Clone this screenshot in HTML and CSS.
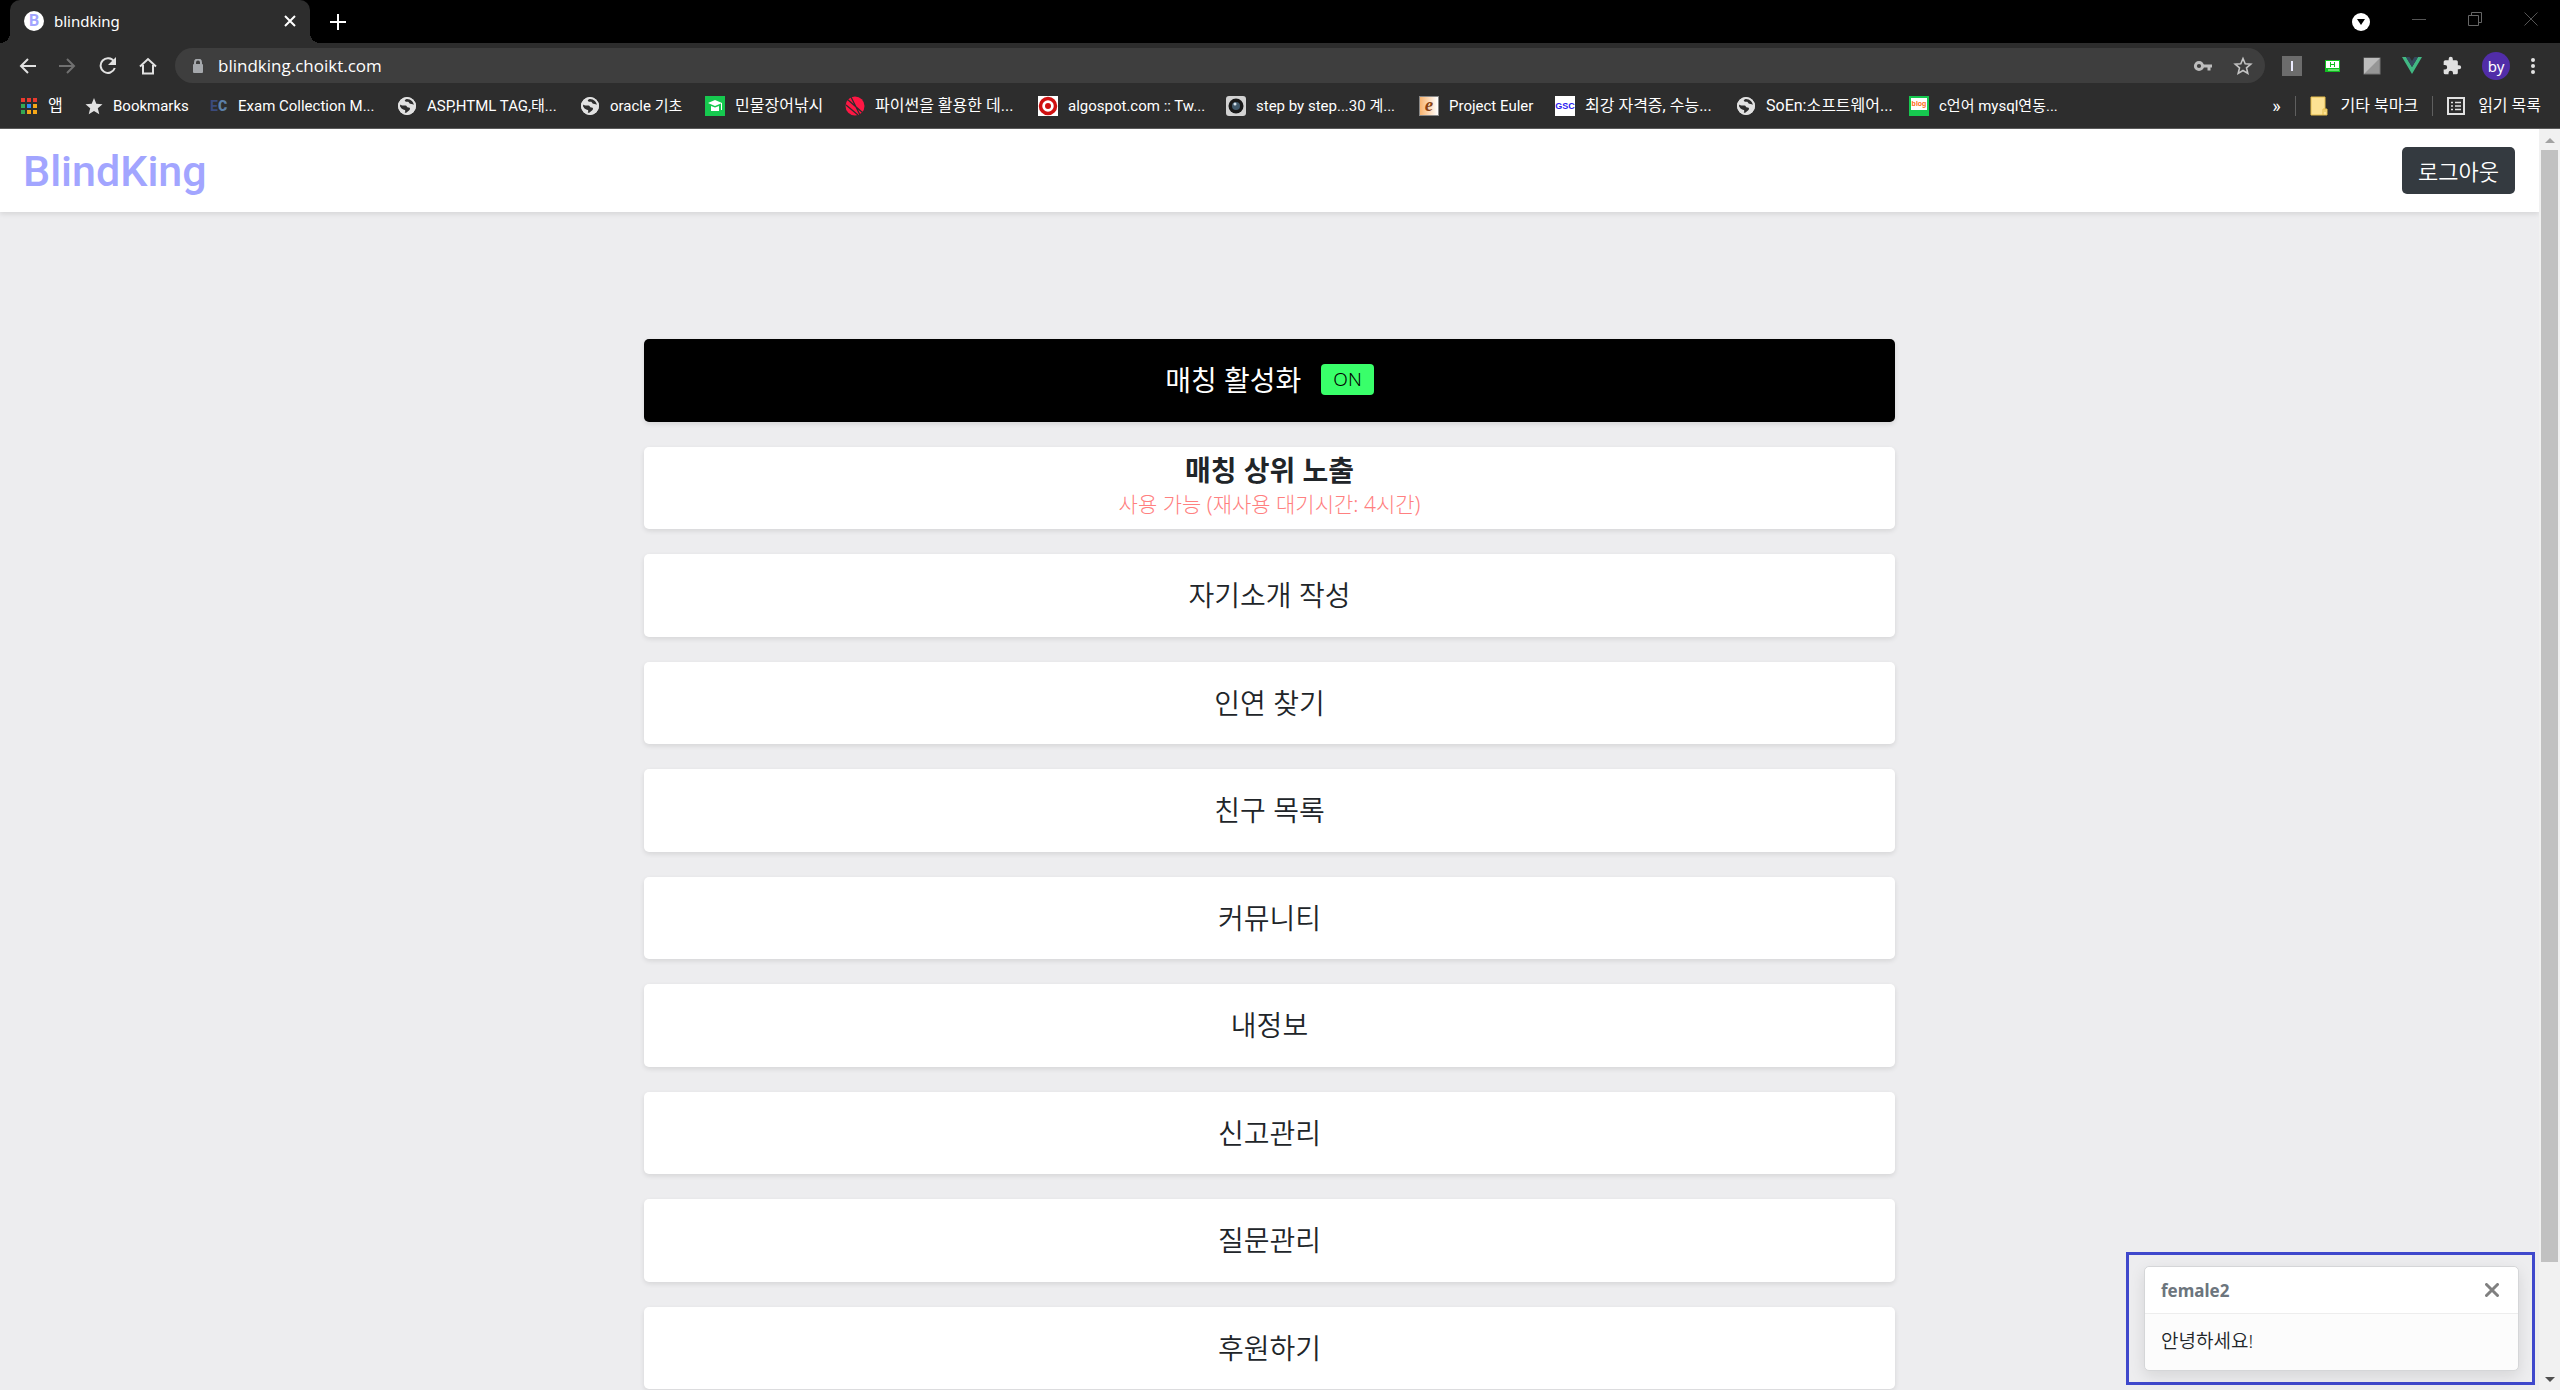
FILE: index.html
```html
<!DOCTYPE html>
<html lang="ko">
<head>
    <meta charset="UTF-8">
    <meta name="viewport" content="width=device-width, initial-scale=1.0">
    <title>blindking</title>
    <link rel="stylesheet" href="styles.css">
</head>
<body>
    <!-- globe icon, used by several bookmarks -->
    <svg class="defs" width="0" height="0">
        <symbol id="globe" viewBox="0 0 20 20">
            <circle cx="10" cy="10" r="9" fill="#e1e1e1"/>
            <path d="M2.500 8c2 2 4 1.500 6 1.500 1.500 0 1 2 3 2s2 2 .5 3-2 2-4 3c-1-1 1-2 0-3.500-3-.5-5.500-3-5.500-6zM10 2.500c-2 1-3 2-1.500 3s2-.5 3 .5 1 2 3 2 1.500 1 3 1c.5-3-2-6-4.500-6.500z" fill="#2d2d2d"/>
            <circle cx="10" cy="10" r="8" fill="none" stroke="#e1e1e1" stroke-width="2"/>
        </symbol>
    </svg>

    <div class="browser">
        <div class="tab-strip">
            <div class="tab">
                <span class="favicon">B</span>
                <span class="tab-title">blindking</span>
                <button class="icon-btn" aria-label="탭 닫기">
                    <svg width="12" height="12" viewBox="0 0 12 12"><path d="M1 1l10 10M11 1L1 11" stroke="#fff" stroke-width="2"/></svg>
                </button>
            </div>
            <button class="icon-btn" aria-label="새 탭">
                <svg width="16" height="16" viewBox="0 0 16 16"><path d="M8 0v16M0 8h16" stroke="#fff" stroke-width="2"/></svg>
            </button>
            <div class="window-controls">
                <button class="icon-btn" aria-label="탭 검색">
                    <svg width="18" height="18" viewBox="0 0 18 18"><circle cx="9" cy="9" r="9" fill="#fff"/><path d="M5 6h8l-4 6z" fill="#000"/></svg>
                </button>
                <button class="icon-btn system" aria-label="최소화">
                    <svg width="14" height="14" viewBox="0 0 14 14"><path d="M0 7.500h14" stroke="#555"/></svg>
                </button>
                <button class="icon-btn system" aria-label="이전 크기로">
                    <svg width="14" height="14" viewBox="0 0 14 14"><path d="M.5 3.500h10v10h-10zM3.500 3V.5h10v10H11" fill="none" stroke="#666"/></svg>
                </button>
                <button class="icon-btn system" aria-label="닫기">
                    <svg width="14" height="14" viewBox="0 0 14 14"><path d="M.5.5l13 13M13.500.5l-13 13" stroke="#555"/></svg>
                </button>
            </div>
        </div>

        <div class="toolbar">
            <button class="icon-btn" aria-label="뒤로">
                <svg width="18" height="16" viewBox="0 0 18 16"><path d="M17 8H2M9 1L2 8l7 7" fill="none" stroke="#e1e1e1" stroke-width="2"/></svg>
            </button>
            <button class="icon-btn" aria-label="앞으로">
                <svg width="18" height="16" viewBox="0 0 18 16"><path d="M0 8h15M8 1l7 7-7 7" fill="none" stroke="#707070" stroke-width="2"/></svg>
            </button>
            <button class="icon-btn" aria-label="새로고침">
                <svg width="18" height="18" viewBox="0 0 18 18"><path d="M15 4.500A7.300 7.300 0 1 0 15.800 11" fill="none" stroke="#e1e1e1" stroke-width="2"/><path d="M17 0v8H9z" fill="#e1e1e1"/></svg>
            </button>
            <button class="icon-btn" aria-label="홈">
                <svg width="18" height="18" viewBox="0 0 18 18"><path d="M1 9.500L9 2l8 7.500M4 8v8.500h10V8" fill="none" stroke="#e1e1e1" stroke-width="2"/></svg>
            </button>
            <div class="address-bar">
                <svg width="12" height="14" viewBox="0 0 12 14"><path d="M3 6V3.500a3 3 0 0 1 6 0V6" fill="none" stroke="#a5a8ac" stroke-width="2"/><rect x="1" y="5" width="10" height="9" rx="1" fill="#a5a8ac"/></svg>
                <input class="address" type="text" value="blindking.choikt.com" aria-label="주소창">
                <button class="icon-btn" aria-label="비밀번호">
                    <svg width="20" height="12" viewBox="0 0 20 12"><circle cx="6" cy="6" r="3.600" fill="none" stroke="#bdbdbd" stroke-width="3"/><path d="M9 4.500h10v3h-1.500V10.500h-3v-3H9z" fill="#bdbdbd"/></svg>
                </button>
                <button class="icon-btn" aria-label="북마크에 추가">
                    <svg width="20" height="20" viewBox="0 0 20 20"><path d="M10 2.500l2.200 5.200 5.600.5-4.300 3.700 1.300 5.500L10 14.500l-4.800 2.900 1.300-5.500-4.300-3.700 5.600-.5z" fill="none" stroke="#c4c4c4" stroke-width="1.600"/></svg>
                </button>
            </div>
            <div class="extensions">
                <button class="icon-btn" aria-label="확장 I">
                    <svg width="20" height="20" viewBox="0 0 20 20"><rect width="20" height="20" fill="#6c6c6c"/><path d="M10 5v10" stroke="#ececff" stroke-width="2"/></svg>
                </button>
                <button class="icon-btn" aria-label="확장 H">
                    <svg width="20" height="20" viewBox="0 0 20 20"><rect x="3" y="4" width="15" height="12" fill="#10c020"/><rect x="4" y="5" width="13" height="7" fill="#fff"/><path d="M8.500 6v5M12.500 6v5M8 8.500h5" stroke="#10c020"/><path d="M6 14h11" stroke="#b8ffb8"/></svg>
                </button>
                <button class="icon-btn" aria-label="확장">
                    <svg width="20" height="20" viewBox="0 0 20 20"><rect x="2" y="2" width="16" height="16" fill="#969696" stroke="#777"/><path d="M2 2h16L2 18z" fill="#bcbcbc"/></svg>
                </button>
                <button class="icon-btn" aria-label="Vue">
                    <svg width="20" height="20" viewBox="0 0 20 20"><path d="M0 1h4l6 10 6-10h4L10 18z" fill="#41b883"/><path d="M4 1h3.500L10 5l2.500-4H16l-6 10z" fill="#35495e"/></svg>
                </button>
                <button class="icon-btn" aria-label="확장 프로그램">
                    <svg width="20" height="20" viewBox="0 0 24 24"><path d="M20.500 11H19V7a2 2 0 0 0-2-2h-4V3.500a2.500 2.500 0 0 0-5 0V5H4a2 2 0 0 0-2 2v3.800h1.500a2.700 2.700 0 0 1 0 5.400H2V20a2 2 0 0 0 2 2h3.800v-1.500a2.700 2.700 0 0 1 5.400 0V22H17a2 2 0 0 0 2-2v-4h1.500a2.500 2.500 0 0 0 0-5z" fill="#e1e1e1"/></svg>
                </button>
                <button class="profile">by</button>
                <button class="icon-btn" aria-label="메뉴">
                    <svg width="6" height="18" viewBox="0 0 6 18"><circle cx="3" cy="3" r="2" fill="#e1e1e1"/><circle cx="3" cy="9" r="2" fill="#e1e1e1"/><circle cx="3" cy="15" r="2" fill="#e1e1e1"/></svg>
                </button>
            </div>
        </div>

        <div class="bookmark-bar">
            <nav class="bookmarks">
                <a class="ko" href="#">
                    <svg width="18" height="18" viewBox="0 0 18 18"><path d="M1 1h4v4H1zM7 1h4v4H7zM13 1h4v4h-4z" fill="#ea3a2e"/><path d="M1 7h4v4H1zM1 13h4v4H1z" fill="#34a853"/><path d="M7 7h4v4H7z" fill="#2f8af5"/><path d="M13 7h4v4h-4zM7 13h4v4H7zM13 13h4v4h-4z" fill="#f5a718"/></svg>
                    앱
                </a>
                <a href="#">
                    <svg width="18" height="18" viewBox="0 0 18 18"><path d="M9 1l2.300 5.700 6.200.5-4.700 4 1.500 6L9 14l-5.300 3.200 1.500-6-4.700-4 6.200-.5z" fill="#e1e1e1"/></svg>
                    Bookmarks
                </a>
                <a href="#"><span class="ec">E<b>C</b></span>Exam Collection M...</a>
                <a href="#"><svg width="20" height="20"><use href="#globe"/></svg>ASP,HTML TAG,태...</a>
                <a href="#"><svg width="20" height="20"><use href="#globe"/></svg>oracle 기초</a>
                <a class="ko" href="#">
                    <svg width="20" height="20" viewBox="0 0 20 20"><rect width="20" height="20" fill="#16c94f"/><path d="M3 7l7-3 7 3-7 3z" fill="#fff"/><path d="M6 10l4 1.500 4-1.500v5H6zM16 7h1v7h-1z" fill="#fff"/></svg>
                    민물장어낚시
                </a>
                <a class="ko" href="#">
                    <svg width="20" height="20" viewBox="0 0 20 20"><circle cx="10" cy="10" r="9.500" fill="#ff1744"/><path d="M2 3l16 14M6 1l9 18M1 9l12 10" stroke="#2d2d2d" stroke-width="1.300"/></svg>
                    파이썬을 활용한 데...
                </a>
                <a href="#">
                    <svg width="20" height="20" viewBox="0 0 20 20"><rect width="20" height="20" fill="#fff"/><circle cx="10" cy="10" r="7.500" fill="none" stroke="#cf1010" stroke-width="3.500"/><circle cx="10" cy="10" r="3" fill="#cf1010"/></svg>
                    algospot.com :: Tw...
                </a>
                <a href="#">
                    <svg width="20" height="20" viewBox="0 0 20 20"><rect width="20" height="20" rx="3" fill="#d2d2d2"/><circle cx="10" cy="10" r="7.500" fill="#191919"/><circle cx="10" cy="10" r="4" fill="#41596b"/><circle cx="9" cy="8" r="1.500" fill="#d8e4ee"/></svg>
                    step by step...30 계...
                </a>
                <a href="#"><span class="euler">e</span>Project Euler</a>
                <a class="ko" href="#"><span class="gsc">GSC</span>최강 자격증, 수능...</a>
                <a class="ko" href="#"><svg width="20" height="20"><use href="#globe"/></svg>SoEn:소프트웨어...</a>
                <a href="#"><span class="blog">blog</span>c언어 mysql연동...</a>
            </nav>
            <div class="bookmark-side">
                <button class="icon-btn more" aria-label="북마크 더보기">»</button>
                <a class="side-link ko" href="#">
                    <svg width="18" height="20" viewBox="0 0 18 20"><path d="M1 1h14v12h2v6H1z" fill="#fde293" stroke="#e5bd4c"/><path d="M13 19v-6h2v3" fill="none" stroke="#e5bd4c"/></svg>
                    기타 북마크
                </a>
                <a class="side-link ko" href="#">
                    <svg width="18" height="18" viewBox="0 0 18 18"><path d="M1 1h16v16H1z" fill="none" stroke="#e1e1e1" stroke-width="2"/><path d="M4 5.500h2M4 9h2M4 12.500h2M8 5.500h6M8 9h6M8 12.500h6" stroke="#e1e1e1" stroke-width="1.500"/></svg>
                    읽기 목록
                </a>
            </div>
        </div>
    </div>

    <div class="viewport">
        <div class="page">
            <header class="header">
                <a class="logo" href="#">BlindKing</a>
                <button class="logout">로그아웃</button>
            </header>

            <main class="menu">
                <button class="menu-btn active">매칭 활성화 <span class="badge">ON</span></button>
                <button class="menu-btn two-line">
                    <strong>매칭 상위 노출</strong>
                    <span class="hint">사용 가능 (재사용 대기시간: 4시간)</span>
                </button>
                <button class="menu-btn">자기소개 작성</button>
                <button class="menu-btn">인연 찾기</button>
                <button class="menu-btn">친구 목록</button>
                <button class="menu-btn">커뮤니티</button>
                <button class="menu-btn">내정보</button>
                <button class="menu-btn">신고관리</button>
                <button class="menu-btn">질문관리</button>
                <button class="menu-btn">후원하기</button>
            </main>
        </div>

        <div class="scrollbar">
            <svg width="10" height="5" viewBox="0 0 10 5"><path d="M0 5l5-5 5 5z" fill="#a3a3a3"/></svg>
            <div class="track"><div class="thumb"></div></div>
            <svg width="10" height="5" viewBox="0 0 10 5"><path d="M0 0l5 5 5-5z" fill="#505050"/></svg>
        </div>

        <!-- new message notification -->
        <div class="toast-area">
            <div class="toast">
                <div class="toast-header">
                    <strong>female2</strong>
                    <button class="icon-btn" aria-label="알림 닫기">
                        <svg width="14" height="14" viewBox="0 0 14 14"><path d="M1.500 1.500l11 11M12.500 1.500l-11 11" stroke="#808080" stroke-width="3" stroke-linecap="round"/></svg>
                    </button>
                </div>
                <div class="toast-body">안녕하세요!</div>
            </div>
        </div>
    </div>
</body>
</html>
```
FILE: styles.css
```css
* {
    box-sizing: border-box;
}

body {
    margin: 0;
    height: 100vh;
    display: flex;
    flex-direction: column;
    overflow: hidden;
    font-family: "Noto Sans", "Noto Sans CJK KR", sans-serif;
    background-color: #ededef;
    color: #212529;
}

button,
input {
    font-family: inherit;
    border: none;
    padding: 0;
    background: none;
    color: inherit;
}

button {
    cursor: pointer;
}

a {
    color: inherit;
    text-decoration: none;
}

svg {
    display: block;
    flex: none;
}

.defs {
    position: absolute;
}

.icon-btn {
    display: flex;
    align-items: center;
    justify-content: center;
}

/* browser window */
.browser {
    flex: none;
    background-color: #2d2d2d;
    color: #fff;
    font-size: 15px;
    border-bottom: 1px solid #5a5a5a;
}

.tab-strip {
    display: flex;
    align-items: center;
    gap: 20px;
    height: 43px;
    padding-left: 10px;
    background-color: #000;
}

.tab {
    position: relative;
    display: flex;
    align-items: center;
    gap: 10px;
    width: 300px;
    height: 43px;
    padding: 0 14px 2px;
    background-color: #2d2d2d;
    border-radius: 10px 10px 0 0;
}

.tab::before,
.tab::after {
    content: "";
    position: absolute;
    bottom: 0;
    width: 10px;
    height: 10px;
}

.tab::before {
    right: 100%;
    background: radial-gradient(circle at 0 0, #000 10px, #2d2d2d 10px);
}

.tab::after {
    left: 100%;
    background: radial-gradient(circle at 100% 0, #000 10px, #2d2d2d 10px);
}

.favicon {
    width: 20px;
    height: 20px;
    border-radius: 50%;
    background-color: #fff;
    color: #a2a5ff;
    font: bold 16px/20px Roboto, sans-serif;
    text-align: center;
}

.tab-title {
    flex: 1;
}

.window-controls {
    display: flex;
    align-items: center;
    gap: 42px;
    margin-left: auto;
    padding: 0 22px 0 0;
}

.system {
    padding-bottom: 6px;
}

.toolbar {
    display: flex;
    align-items: center;
    gap: 22px;
    height: 45px;
    padding: 0 24px 0 19px;
}

.address-bar {
    flex: 1;
    display: flex;
    align-items: center;
    gap: 20px;
    height: 35px;
    margin-left: -4px;
    padding: 0 12px 0 17px;
    border-radius: 18px;
    background-color: #3e3e3e;
}

.address {
    flex: 1;
    height: 35px;
    margin-left: -6px;
    font-family: "Open Sans", sans-serif;
    font-size: 17px;
    outline: none;
}

.extensions {
    display: flex;
    align-items: center;
    gap: 20px;
    margin-left: -5px;
}

.profile {
    width: 28px;
    height: 28px;
    border-radius: 50%;
    background-color: #512da8;
    font-size: 15px;
    line-height: 26px;
}

.bookmark-bar {
    display: flex;
    align-items: center;
    height: 40px;
    padding: 0 19px 4px 20px;
    font-family: Roboto, "Noto Sans CJK KR", sans-serif;
    line-height: 24px;
}

.bookmarks {
    display: grid;
    grid-template-columns: 65px 125px 187px 183px 125px 140px 193px 188px 193px 136px 181px 173px auto;
    white-space: nowrap;
}

.bookmarks a,
.side-link {
    display: flex;
    align-items: center;
    gap: 10px;
}

.bookmark-side {
    display: flex;
    align-items: center;
    gap: 14px;
    margin-left: auto;
    white-space: nowrap;
}

.bookmark-side .side-link {
    height: 20px;
    padding-left: 14px;
    gap: 13px;
    border-left: 1px solid #5f5f5f;
}

.ko {
    font-size: 16px;
}

.more {
    font-size: 18px;
    line-height: 20px;
}

.ec {
    width: 18px;
    color: #3b4a7c;
    font-size: 14px;
    font-weight: bold;
}

.ec b {
    color: #5c80a8;
}

.euler,
.gsc,
.blog {
    width: 20px;
    height: 20px;
    text-align: center;
}

.euler {
    background: linear-gradient(to right, #f9b36e, #fff);
    border: 1px solid #888;
    color: #8a4210;
    font: italic bold 19px/15px "Liberation Serif", serif;
}

.gsc {
    background-color: #fff;
    color: #2a20f0;
    font: bold 9px/20px "Liberation Sans", sans-serif;
}

.blog {
    border: 2px solid #16c94f;
    border-bottom-width: 6px;
    background-color: #fff;
    color: #ff6a13;
    font: bold 7px/11px "Liberation Sans", sans-serif;
}

/* page */
.viewport {
    position: relative;
    flex: 1;
    display: flex;
    min-height: 0;
}

.page {
    flex: 1;
    overflow: hidden;
}

.header {
    display: flex;
    align-items: center;
    justify-content: space-between;
    height: 83px;
    padding: 0 24px 0 23px;
    background-color: #fff;
    box-shadow: 0 2px 5px rgba(0, 0, 0, 0.1);
}

.logo {
    color: #a2a5ff;
    font-family: Roboto, sans-serif;
    font-size: 43px;
    font-weight: 500;
}

.logout {
    height: 47px;
    padding: 0 16px;
    border-radius: 5px;
    background-color: #343a40;
    color: #fff;
    font-size: 22px;
    font-weight: 350;
    line-height: 44px;
}

.menu {
    display: grid;
    grid-auto-rows: 1fr;
    gap: 25px;
    max-width: 1251px;
    min-height: 1050px;
    margin: 127px auto 100px;
}

.menu-btn {
    display: flex;
    align-items: center;
    justify-content: center;
    gap: 20px;
    padding-bottom: 2px;
    border-radius: 5px;
    background-color: #fff;
    box-shadow: 0 2px 5px rgba(0, 0, 0, 0.1);
    font-size: 28px;
    font-weight: 350;
}

.active {
    background-color: #000;
    color: #fff;
    font-weight: 400;
}

.badge {
    padding: 0 12px;
    border-radius: 4px;
    background-color: #39ff6a;
    color: #000;
    font-size: 19px;
    font-weight: 350;
    line-height: 31px;
}

.two-line {
    flex-direction: column;
    gap: 0;
    line-height: 34px;
}

.hint {
    color: #ff8080;
    font-size: 21px;
    font-weight: 300;
}

.scrollbar {
    display: flex;
    flex-direction: column;
    align-items: center;
    width: 21px;
    padding: 9px 0 8px;
    background-color: #f1f1f1;
}

.track {
    flex: 1;
    width: 17px;
    margin: 7px 0 18px;
}

.thumb {
    height: 92%;
    background-color: #c1c1c1;
}

.toast-area {
    position: absolute;
    right: 25px;
    bottom: 5px;
    width: 409px;
    padding: 11px 13px 11px 15px;
    border: 3px solid #3f48cc;
}

.toast {
    border: 1px solid #d5d6d8;
    border-radius: 5px;
    background-color: #fcfcfc;
    box-shadow: 0 5px 15px rgba(0, 0, 0, 0.1);
    font-size: 17px;
}

.toast-header {
    display: flex;
    align-items: center;
    justify-content: space-between;
    height: 47px;
    padding: 0 19px 0 16px;
    border-bottom: 1px solid #ededed;
    border-radius: 5px 5px 0 0;
    background-color: #fff;
    color: #6c757d;
}

.toast-body {
    padding: 14px 16px 16px;
    font-size: 19px;
    line-height: 26px;
    font-weight: 350;
}
```
